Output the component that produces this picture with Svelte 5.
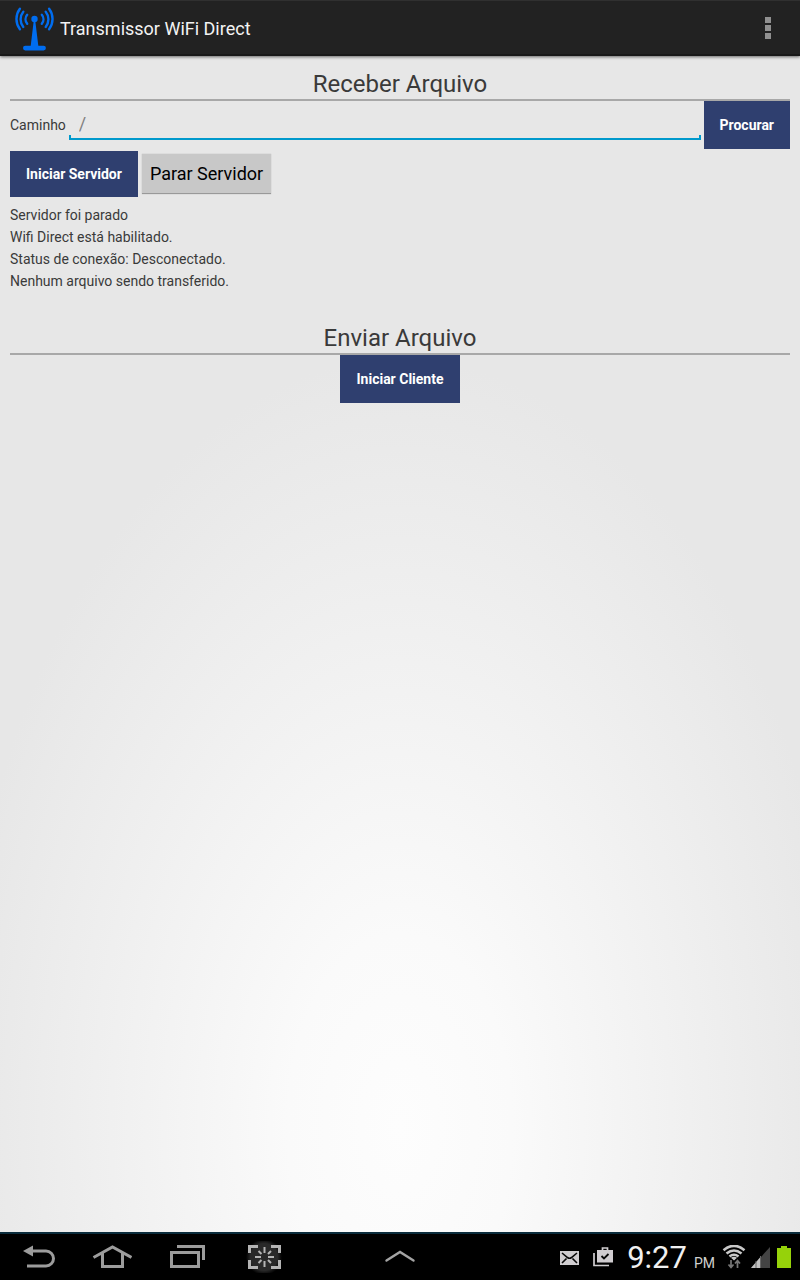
<script>
  let path = $state('');
  const status = [
    'Servidor foi parado',
    'Wifi Direct está habilitado.',
    'Status de conexão: Desconectado.',
    'Nenhum arquivo sendo transferido.'
  ];
</script>

<div class="screen">
  <header class="action-bar">
    <svg class="logo" width="40" height="48" viewBox="0 1 40 48" aria-hidden="true">
      <g fill="none" stroke="#006df0" stroke-width="2.4" stroke-linecap="round">
        <path d="M12.200 10.800a7 7 0 0 0 0 9M8.300 7.700a12 12 0 0 0 0 15.200M4.900 4.700a17 17 0 0 0 0 20.500" />
        <path d="M26.800 10.800a7 7 0 0 1 0 9M30.700 7.700a12 12 0 0 1 0 15.200M34.100 4.700a17 17 0 0 1 0 20.500" />
      </g>
      <circle cx="19.500" cy="15" r="3.200" fill="#006df0" />
      <path d="M18.700 17h1.600L23.300 41.800h5.300a2.300 2.300 0 0 1 0 4.600H10.300a2.300 2.300 0 0 1 0-4.600h5.400z" fill="#006df0" />
    </svg>
    <h1>Transmissor WiFi Direct</h1>
    <button class="overflow" aria-label="Mais opções"><i></i><i></i><i></i></button>
  </header>

  <main>
    <section>
      <h2>Receber Arquivo</h2>
      <div class="path-row">
        <label for="path">Caminho</label>
        <div class="field"><input id="path" type="text" placeholder="/" bind:value={path} /></div>
        <button class="primary">Procurar</button>
      </div>
      <div class="server-row">
        <button class="primary start">Iniciar Servidor</button>
        <button class="plain">Parar Servidor</button>
      </div>
      <div class="status">
        {#each status as line}<p>{line}</p>{/each}
      </div>
    </section>
    <section class="send">
      <h2>Enviar Arquivo</h2>
      <button class="primary">Iniciar Cliente</button>
    </section>
  </main>

  <footer class="system-bar">
    <nav class="keys">
      <button aria-label="Voltar">
        <svg width="40" height="32" viewBox="0 0 40 32"><path d="M14 10H30a7.500 7.500 0 0 1 0 15H11" fill="none" stroke="#9c9c9c" stroke-width="3" /><path d="M7 10 17 4.500v11z" fill="#9c9c9c" /></svg>
      </button>
      <button aria-label="Início">
        <svg width="40" height="32" viewBox="0 0 40 32"><path d="M1.500 16.500 20.500 6 39.500 16.500M10.500 12.500V25.500H30.500V12.500" fill="none" stroke="#9c9c9c" stroke-width="3" /></svg>
      </button>
      <button aria-label="Aplicativos recentes">
        <svg width="40" height="32" viewBox="0 0 40 32"><path d="M3.500 11.500h27v14h-27zM9 5.500H35.500V19" fill="none" stroke="#9c9c9c" stroke-width="3" /></svg>
      </button>
      <button class="capture" aria-label="Capturar tela">
        <svg width="40" height="32" viewBox="0 0 40 32"><g fill="none" stroke="#b4b4b4" stroke-width="3"><path d="M5.500 12V5.500H14M27 5.500H35.500V12M35.500 19V26.500H27M14 26.500H5.500V19" /><path stroke-width="2" d="M20.500 6v6M20.500 20v6M11 16h6M24 16h6M14.500 10l3 3M27 10l-3 3M14.500 22l3-3M27 22l-3-3" /></g></svg>
      </button>
    </nav>
    <button class="expand" aria-label="Expandir">
      <svg width="32" height="16" viewBox="0 0 32 16"><path d="M2.500 11.500 16 3l13.500 8.500" fill="none" stroke="#a4a4a4" stroke-width="2.400" stroke-linecap="round" /></svg>
    </button>
    <div class="tray">
      <svg class="mail" width="19" height="14" viewBox="0 0 19 14" aria-hidden="true"><path fill="#d0cdd0" d="M0 0h19v14H0z" /><path d="M2 2l5.500 4.500Q9.500 8 11.500 6.500L17 2M2 12l4.500-4.500M17 12l-4.500-4.500" fill="none" stroke="#080808" stroke-width="1.600" /></svg>
      <svg class="bag" width="20" height="20" viewBox="0 0 20 20" aria-hidden="true"><path d="M1 6v12.500h15" fill="none" stroke="#d0cdd0" stroke-width="1.700" /><path d="M4 3h16v12.500H4z" fill="#d0cdd0" /><path d="M9.500 4V1h5v3" fill="none" stroke="#d0cdd0" stroke-width="1.700" /><path d="M8.500 9l2.500 2.500 4.500-4.500" fill="none" stroke="#080808" stroke-width="1.800" /></svg>
      <span class="time">9:27</span><span class="pm">PM</span>
      <svg class="wifi" width="24" height="24" viewBox="0 0 24 24" aria-hidden="true"><g fill="none" stroke="#c8c8c8" stroke-width="2.600"><path d="M1.500 5.200Q12-3.500 22.500 5.200M4.500 8.500q7.500-6 15 0M7.500 11.500q4.500-3.500 9 0" /></g><path d="M9 12.800q3-2 6 0L12 15.500z" fill="#c8c8c8" /><path d="M9 15v7M6.500 19.500 9 22.500l2.500-3M15.500 23v-7M13 18.500l2.500-3 2.500 3" fill="none" stroke="#777" stroke-width="1.700" /></svg>
      <svg class="signal" width="20" height="22" viewBox="0 0 20 22" aria-hidden="true"><path d="M19 1v21H0z" fill="#444" /><path d="M9 11.500V22H0z" fill="#c0c0c0" /><path d="M5 15v7M9.500 10v12" stroke="#666" /></svg>
      <svg class="battery" width="14" height="22" viewBox="0 0 14 22" aria-hidden="true"><path d="M4 0h6v2h4v20H0V2h4z" fill="#96d20a" /></svg>
    </div>
  </footer>
</div>

<style>
  :global(body) { margin: 0; }
  .screen {
    min-height: 100vh;
    display: flex;
    flex-direction: column;
    font-family: Roboto, "Liberation Sans", sans-serif;
    font-size: 14px;
    color: #3a3a3a;
    background: radial-gradient(ellipse 56% 60% at 50% 88%, #fdfdfd 0%, #fafafa 25%, #e7e7e7 100%);
  }
  button { border: 0; padding: 0; margin: 0; font: inherit; background: none; }
  svg { display: block; flex: none; }
  h1, h2, p { margin: 0; font-weight: 400; }
  .action-bar {
    box-sizing: border-box;
    height: 56px;
    display: flex;
    align-items: center;
    padding: 2px 16px 0 15px;
    background: #222;
    border-top: 1px solid #303030;
    border-bottom: 2px solid #191919;
    box-shadow: 0 1px 3px rgba(0, 0, 0, .55);
  }
  h1 { flex: 1; padding-left: 5px; font-size: 18px; line-height: 24px; color: #f3f3f3; }
  .overflow { width: 32px; height: 48px; padding-bottom: 2px; display: flex; flex-direction: column; align-items: center; justify-content: center; gap: 2px; }
  .overflow i { width: 6px; height: 6px; background: #909090; }
  main { flex: 1; padding: 12px 10px; }
  h2 {
    padding-top: 1px;
    font-size: 24px;
    line-height: 30px;
    text-align: center;
    border-bottom: 2px solid #a8a8a8;
  }
  .path-row { display: flex; align-items: center; gap: 3px; }
  .field { flex: 1; height: 39px; align-self: flex-start; display: flex; align-items: flex-end; position: relative; }
  .field::after {
    content: "";
    position: absolute;
    inset: auto 0 0 0;
    height: 3px;
    border: 2px solid #0099cc;
    border-top: 0;
    pointer-events: none;
  }
  input {
    width: 100%;
    height: 34px;
    box-sizing: border-box;
    border: 0;
    outline: 0;
    padding: 0 10px;
    background: transparent;
    font: 400 18px Roboto, sans-serif;
    color: #222;
  }
  input::placeholder { color: #808080; opacity: 1; }
  .primary { height: 48px; padding: 0 16px; background: #2f3f6f; color: #fff; font-weight: 700; }
  .primary.start { height: 46px; }
  .server-row { display: flex; align-items: center; gap: 4px; padding-top: 2px; }
  .plain {
    height: 40px;
    padding: 0 8px;
    box-sizing: border-box;
    font-size: 18px;
    color: #000;
    background: #c8c8c8;
    border-bottom: 1px solid #999;
    box-shadow: 0 0 1px #aaa;
  }
  .status { padding-top: 7px; line-height: 22px; }
  .send { padding-top: 30px; text-align: center; }
  .system-bar {
    box-sizing: border-box;
    height: 48px;
    display: grid;
    grid-template-columns: 1fr auto 1fr;
    align-items: center;
    background: #000;
    border-top: 2px solid #0a2c3c;
  }
  .keys { display: flex; gap: 36px; padding-left: 16px; }
  .capture { background: radial-gradient(circle 18px, #292929 75%, transparent 100%); }
  .tray { display: flex; align-items: center; justify-content: flex-end; padding-right: 9px; color: #f0f0f0; }
  .bag { margin-left: 14px; }
  .mail { margin-top: 2px; }
  .time { margin-left: 14px; padding-top: 2px; font-size: 31px; line-height: 40px; }
  .pm { margin-left: 7px; padding-top: 12px; font-size: 14px; line-height: 20px; color: #d0d0d0; }
  .wifi { margin-left: 7px; }
  .signal { margin-left: 5px; }
  .battery { margin-left: 6px; }
</style>
